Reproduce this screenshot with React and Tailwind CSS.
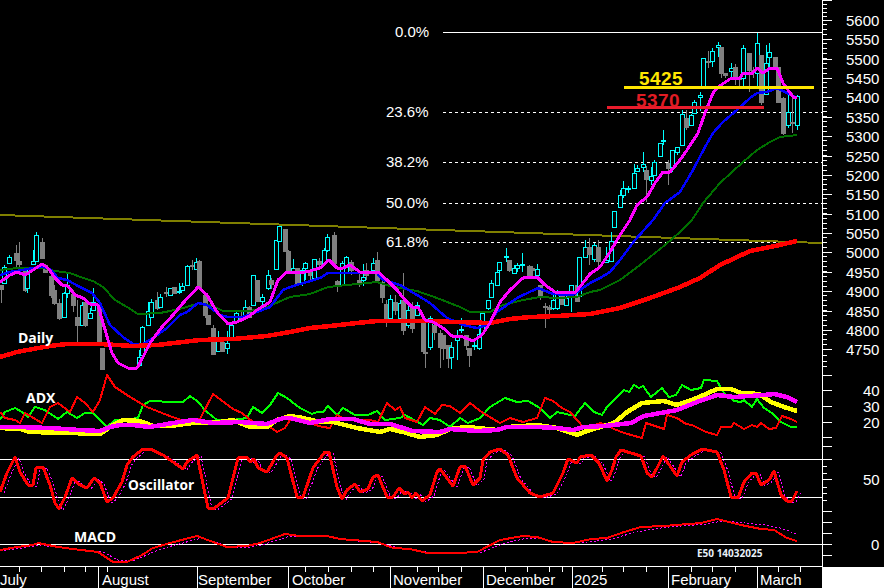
import React from 'react';

// [x, high, low, bodyTop, bodyBottom, up?]
const candles = [
  [1,285,303,285,289,0],[4,265,283,267,283,1],[9,255,263,257,263,1],[16,245,268,253,260,0],[19,242,267,261,264,0],
  [25,269,292,269,290,0],[27,270,293,274,288,1],[33,250,265,261,264,1],[36,232,262,235,261,1],[42,238,258,242,258,0],
  [45,264,273,265,272,0],[51,272,298,276,295,0],[54,285,305,290,303,0],[59,299,320,303,318,0],[64,292,318,293,317,1],
  [67,274,298,285,293,1],[73,290,312,294,305,0],[77,300,342,317,325,0],[82,302,326,305,325,1],[85,300,327,302,325,0],
  [90,308,319,313,318,1],[93,288,310,302,310,1],[99,303,345,304,342,0],[102,348,369,348,369,0],
  [139,350,365,357,365,1],[142,326,356,327,355,1],[148,302,326,311,325,1],[151,299,318,302,317,1],[157,292,310,300,308,0],
  [160,294,308,297,307,1],[166,287,297,292,293,0],[170,288,296,288,295,1],[174,287,293,287,293,0],[179,283,294,291,292,1],
  [182,283,291,286,290,1],[187,265,286,266,285,1],[192,260,270,265,266,0],[196,258,270,262,269,1],[199,260,288,261,287,0],
  [205,295,318,295,315,0],[208,315,325,315,324,0],[213,325,355,328,354,0],[218,331,352,338,351,1],[222,340,352,342,351,0],
  [227,331,354,343,348,1],[231,325,337,325,337,1],[236,312,322,313,322,1],[241,312,320,316,318,0],[245,300,317,307,317,1],
  [249,306,318,307,317,0],[253,275,306,275,305,1],[257,280,302,280,301,0],[262,294,305,297,301,1],[268,270,290,275,288,1],
  [271,278,289,280,284,0],[276,240,270,240,269,1],[279,226,242,226,241,1],[285,229,252,229,251,0],[288,250,272,251,270,0],
  [293,259,272,268,271,1],[297,268,285,268,283,0],[302,268,286,270,283,1],[305,262,280,263,268,1],[310,270,282,272,275,0],
  [314,259,280,259,278,1],[319,258,270,261,264,0],[324,248,265,250,263,1],[327,234,252,237,250,1],[334,232,265,235,263,0],
  [337,280,292,281,286,0],[342,261,286,263,285,1],[346,256,273,257,272,1],[351,260,275,262,270,0],[359,272,287,280,282,0],
  [363,264,286,277,280,1],[366,263,280,270,275,0],[373,258,272,263,270,1],[377,252,280,260,280,0],[382,280,303,282,297,0],
  [386,300,327,304,318,0],[390,295,320,299,318,1],[395,295,315,302,310,0],[400,300,320,303,318,1],[403,273,335,300,330,0],
  [408,305,328,310,325,1],[412,302,333,307,328,0],[417,302,315,305,315,1],[423,322,352,323,351,0],[425,322,368,352,353,0],
  [430,316,350,318,347,1],[434,322,340,325,332,0],[440,330,368,333,347,0],[443,335,360,335,348,0],[448,345,368,345,358,0],
  [451,342,369,347,357,1],[457,330,360,335,340,1],[461,318,333,329,330,1],[466,335,350,335,345,0],[469,348,367,348,355,0],
  [474,340,350,345,346,1],[479,322,350,334,348,1],[482,313,335,313,333,1],[488,300,310,300,308,1],[491,280,298,283,297,1],
  [497,265,286,272,285,1],[499,262,272,262,270,1],[506,248,262,256,257,1],[509,260,272,260,270,0],[514,265,274,268,273,1],
  [517,263,272,265,268,1],[522,253,272,264,265,1],[529,265,275,266,275,0],[532,266,278,268,270,0],[537,264,280,269,275,1],
  [540,285,300,285,297,0],[545,303,328,306,307,0],[549,305,315,307,309,0],[553,290,310,300,308,1],[557,290,310,292,308,1],
  [562,293,305,295,304,0],[566,295,305,298,305,1],[571,285,312,285,297,1],[577,285,302,285,301,0],[579,257,297,257,296,1],
  [585,240,258,247,257,1],[589,238,265,247,254,0],[594,243,262,245,259,1],[598,240,270,247,261,0],[606,247,263,260,262,1],
  [611,232,262,241,261,1],[614,211,227,211,227,1],[620,190,207,195,207,1],[623,181,198,188,195,1],[628,186,193,188,189,1],
  [634,164,189,173,188,1],[637,165,172,168,171,1],[643,152,172,164,167,1],[646,166,202,170,179,0],[651,167,185,176,180,1],
  [654,160,176,162,175,1],[660,143,156,143,156,1],[663,130,145,140,141,1],[668,160,185,163,168,0],[672,150,172,150,167,1],
  [677,147,155,147,152,1],[682,110,145,114,145,1],[686,110,130,118,127,0],[691,114,126,115,125,1],[694,100,113,102,113,1],
  [700,92,111,95,97,1],[703,58,88,58,87,1],[708,51,68,61,62,0],[712,48,67,51,61,1],[718,42,57,45,47,1],
  [721,47,78,47,73,0],[725,73,78,73,75,0],[731,63,77,68,71,1],[735,64,85,67,77,0],[739,77,86,77,79,0],
  [743,45,86,48,78,1],[749,53,92,53,70,0],[753,67,78,70,72,0],[757,33,88,43,73,1],[761,55,105,55,102,0],
  [766,45,95,63,94,1],[769,43,70,52,57,1],[775,57,68,57,68,0],[778,67,102,67,102,0],[783,97,135,98,133,0],
  [788,90,128,112,125,1],[792,93,133,122,123,0],[797,95,130,96,125,1],
];

const ma5 = "0,282 10,275 17,272 25,275 33,270 42,264 48,268 55,278 62,285 68,286 75,295 83,298 90,304 98,305 103,323 112,353 118,363 128,368 137,368 143,357 150,343 162,327 173,315 183,303 198,287 207,295 217,312 228,324 237,322 248,317 257,310 270,302 278,280 287,272 300,273 310,271 320,268 329,260 337,268 343,268 350,265 360,272 378,272 387,280 397,290 405,300 412,307 418,307 425,320 433,322 443,328 452,336 463,337 473,341 482,335 490,323 500,302 510,290 523,278 537,277 545,285 555,292 575,293 583,283 590,274 600,267 610,252 620,235 630,220 637,205 647,197 655,183 663,172 670,172 680,160 687,150 698,133 705,113 713,93 718,87 730,79 740,78 743,73 753,73 757,68 763,73 770,68 777,68 783,83 793,97 797,97";
const ma20 = "0,275 10,272 23,270 33,268 43,267 50,269 58,278 67,280 80,287 92,293 100,303 110,325 123,337 133,344 143,344 153,338 167,328 180,315 187,312 198,303 207,305 220,315 228,317 243,317 257,312 270,307 283,290 290,287 307,282 320,278 328,273 350,273 377,273 383,280 400,285 417,295 430,303 447,318 463,325 477,328 487,325 497,312 517,298 538,288 553,294 573,295 590,283 600,278 610,272 620,260 635,240 653,220 665,203 680,192 693,170 705,147 713,133 723,122 737,110 750,98 757,93 767,92 777,88 787,93 795,97";
const ma50 = "0,270 17,268 43,268 55,271 70,273 83,278 93,281 103,287 115,300 127,307 138,314 160,313 170,311 183,308 200,303 213,306 223,311 250,311 267,307 290,297 310,294 328,287 347,285 377,282 390,286 417,291 437,298 460,307 470,312 490,312 503,305 523,300 540,297 557,298 577,297 590,292 600,290 620,280 640,265 665,245 680,232 692,220 703,203 720,183 743,162 757,150 770,142 780,137 797,135";
const ma200 = "0,357 17,352 33,349 50,346 67,344 100,344 133,346 157,345 200,340 233,339 267,336 290,332 310,328 330,326 357,323 377,321 423,321 457,322 490,323 510,319 530,317 557,316 590,314 620,308 650,298 680,287 700,278 720,265 750,251 775,246 797,241";

const diPlus = "0,420 5,412 15,408 22,412 28,417 35,407 45,410 58,419 67,412 77,418 85,413 93,413 100,420 107,427 115,420 130,419 138,418 143,405 150,401 173,402 183,402 190,396 197,401 207,412 217,420 233,420 247,418 253,407 262,413 270,405 278,393 287,398 300,408 312,414 317,412 323,412 328,406 337,415 343,408 355,415 368,415 377,411 385,420 400,418 405,415 423,425 430,418 440,420 450,427 460,418 468,423 480,418 490,407 505,398 517,402 528,401 540,408 550,418 557,412 575,416 585,403 594,412 602,415 607,407 616,398 624,390 629,392 634,385 639,388 643,386 651,397 662,388 669,397 676,395 682,385 691,390 701,388 704,380 717,381 721,388 724,393 734,401 741,402 744,400 752,407 757,399 764,408 772,413 781,422 791,427 797,427";
const diMinus = "0,412 5,418 15,420 20,423 25,413 42,423 50,407 58,403 70,412 77,397 85,403 93,412 100,400 107,375 115,387 130,397 147,407 167,415 187,422 200,419 213,394 233,409 242,413 253,422 267,425 277,432 285,428 290,420 300,417 312,424 323,427 330,428 337,415 345,419 357,420 370,420 378,422 387,403 395,410 400,407 405,418 417,422 425,407 435,414 442,405 450,406 460,413 470,403 483,413 500,423 510,418 523,422 537,418 545,398 553,401 562,408 570,412 584,428 601,423 614,429 624,433 642,438 646,423 664,429 667,415 677,418 686,424 692,425 706,432 717,435 721,427 731,427 734,423 744,429 752,425 757,427 761,423 769,429 776,428 782,416 791,419 797,422";
const adx = "0,428 20,429 30,432 70,433 100,434 113,425 123,420 140,421 153,426 170,426 193,423 220,422 233,420 250,427 267,427 277,420 290,416 303,418 320,422 333,422 357,428 380,432 390,429 403,432 420,437 437,435 450,429 467,427 497,430 507,427 537,425 557,428 577,435 584,432 597,428 614,423 627,412 642,403 664,401 677,405 697,398 717,389 731,389 741,393 759,394 771,402 784,407 797,411";
const adxSig = "0,427 17,427 50,428 80,430 100,431 110,427 120,425 133,425 150,427 167,424 193,420 213,423 240,422 267,424 283,418 290,418 310,423 330,419 353,419 370,424 390,424 413,431 440,432 450,429 477,431 497,430 507,427 537,427 557,428 573,430 584,427 604,426 631,423 644,416 677,410 697,402 717,395 734,397 764,395 774,394 787,397 797,402";

const osc = "0,492 7,473 15,457 20,472 28,485 33,485 36,468 43,467 50,485 55,503 59,509 65,497 72,478 80,485 87,488 94,478 100,483 107,502 113,498 122,482 127,465 133,457 143,449 150,449 163,455 173,462 183,469 187,462 197,455 208,508 213,509 228,498 238,458 247,457 250,462 254,459 258,468 267,472 277,455 280,453 287,458 297,497 303,497 313,468 325,452 329,452 337,487 342,499 347,490 355,484 360,492 368,489 373,477 378,475 387,497 393,497 399,488 405,494 408,492 412,498 416,493 422,501 430,495 437,472 440,469 453,486 460,467 465,466 473,485 480,478 483,460 490,452 500,449 508,455 517,478 530,493 540,497 553,493 563,473 568,459 577,463 580,457 591,455 599,463 607,481 612,470 616,457 621,450 641,456 647,473 652,477 657,468 663,456 677,476 682,462 691,455 702,449 717,452 724,470 731,497 738,498 744,482 752,473 756,473 761,485 769,480 774,471 781,495 787,501 792,501 797,491";
const macd = "0,550 17,547 33,545 38,543 58,547 73,549 98,552 113,562 127,562 142,555 153,548 170,543 197,536 213,542 227,547 247,546 260,543 285,534 300,536 327,536 340,539 377,542 393,548 410,549 427,553 457,553 477,552 500,540 523,536 537,537 553,542 573,543 591,539 607,538 624,532 641,527 664,526 701,523 717,519 741,525 761,529 774,530 787,538 797,541";
const macdSig = "0,551 22,548 40,545 62,548 78,550 103,552 118,560 132,561 147,555 158,550 175,545 202,538 218,543 232,548 252,547 265,544 290,536 332,537 345,540 382,543 398,548 415,550 432,553 462,553 482,552 505,543 528,538 542,538 558,542 578,543 596,541 612,539 629,534 646,530 669,527 706,524 722,521 745,523 765,525 780,528 797,534";

const fibo = [
  ['23.6%', 112], ['38.2%', 162], ['50.0%', 203], ['61.8%', 242],
];

const prices = [5600,5550,5500,5450,5400,5350,5300,5250,5200,5150,5100,5050,5000,4950,4900,4850,4800,4750];
const priceY = i => Math.round(20 + i * 19.37);

// minor ticks under every price step, then the indicator scale
const minorTicks = [0, 5, 10, 15];
const majorLower = [375, 390, 406, 422, 437, 446, 459, 479, 511, 522, 533, 544, 555];
const minorLower = [466, 473, 487, 493, 500];

const weekTicks = [19,41,64,85,107,305,328,351,373,417,438,461,505,527,549,562,602,623,646,691,712,735,778,800];
const monthLines = [98,197,288,390,483,572,668,757];
const months = [['July',0],['August',102],['September',198],['October',292],['November',393],['December',486],['2025',574],['February',671],['March',760]];

const Candle = ({ c }) => {
  const [x, hi, lo, top, bot, up] = c;
  const color = up ? '#00ffff' : '#808080';
  return (
    <g>
      <line x1={x + 0.5} x2={x + 0.5} y1={hi} y2={lo} stroke={color} />
      {up ? (
        <rect x={x - 1.5} y={top + 0.5} width={4} height={bot - top} fill="#000" stroke={color} />
      ) : (
        <rect x={x - 2} y={top} width={5} height={bot - top + 1} fill={color} />
      )}
    </g>
  );
};

const Line = ({ points, color, w = 2, dash }) => (
  <polyline points={points} fill="none" stroke={color} strokeWidth={w} strokeDasharray={dash} strokeLinejoin="round" />
);

export default function App() {
  return (
    <div className="flex h-[588px] w-[884px] flex-col overflow-hidden bg-black font-['Liberation_Sans',sans-serif]">
      <svg width="884" height="566" className="block" shapeRendering="crispEdges">
        {/* fibonacci levels */}
        <line x1="443" x2="822" y1="32.5" y2="32.5" stroke="#fff" />
        {fibo.map(([label, y]) => (
          <line key={label} x1="443" x2="822" y1={y + 0.5} y2={y + 0.5} stroke="#fff" strokeDasharray="3 3" />
        ))}
        <text x="395" y="37" className="fill-white text-[15px]">0.0%</text>
        {fibo.map(([label, y]) => (
          <text key={label} x="386" y={y + 5} className="fill-white text-[15px]">{label}</text>
        ))}

        <line x1="0" y1="215" x2="822" y2="243" stroke="#808000" strokeWidth="2" />

        {candles.map(c => <Candle key={c[0]} c={c} />)}

        <Line points={ma50} color="#007000" w={2} />
        <Line points={ma20} color="#0000ff" w={2.5} />
        <Line points={ma200} color="#ff0000" w={4.5} />
        <Line points={ma5} color="#ff00ff" w={3} />

        <line x1="607" x2="764" y1="107.5" y2="107.5" stroke="#ea1c2c" strokeWidth="3" />
        <line x1="624" x2="814" y1="87.5" y2="87.5" stroke="#ffe600" strokeWidth="3" />
        <text x="639" y="85" className="fill-[#ffe600] text-[19px] font-bold tracking-[0.4px]">5425</text>
        <text x="636" y="107" className="fill-[#e01c24] text-[19px] font-bold tracking-[0.4px]">5370</text>

        {/* adx */}
        <Line points={diPlus} color="#00ff00" w={2} />
        <Line points={diMinus} color="#ff0000" w={2} />
        <Line points={adx} color="#ffff00" w={4.5} />
        <Line points={adxSig} color="#ff00ff" w={4.5} />

        {/* oscillator */}
        <line x1="0" x2="822" y1="459.5" y2="459.5" stroke="#fff" />
        <line x1="0" x2="822" y1="497.5" y2="497.5" stroke="#fff" />
        <g transform="translate(4 1)">
          <Line points={osc} color="#ff00ff" w={1} dash="2 2" />
        </g>
        <Line points={osc} color="#ff0000" w={3} />

        {/* macd */}
        <line x1="0" x2="822" y1="544.5" y2="544.5" stroke="#fff" />
        <Line points={macdSig} color="#ff00ff" w={1} dash="2 2" />
        <Line points={macd} color="#ff0000" w={2} />

        <text x="18" y="343" className="fill-white font-['Open_Sans',sans-serif] text-[14px] font-bold">Daily</text>
        <text x="26" y="403" className="fill-white font-['Open_Sans',sans-serif] text-[14px] font-bold">ADX</text>
        <text x="128" y="490" className="fill-white font-['Open_Sans',sans-serif] text-[13.7px] font-bold">Oscillator</text>
        <text x="74" y="542" className="fill-white font-['Open_Sans',sans-serif] text-[14px] font-bold">MACD</text>
        <text x="697" y="557" className="fill-[#e8f0f8] font-['Open_Sans',sans-serif] text-[10px] font-bold">E50 14032025</text>

        {/* right scale */}
        <line x1="822.5" x2="822.5" y1="0" y2="566" stroke="#fff" />
        <line x1="822" x2="832" y1="0.5" y2="0.5" stroke="#fff" />
        {prices.map((p, i) => (
          <g key={p}>
            <line x1="822" x2="832" y1={priceY(i) + 0.5} y2={priceY(i) + 0.5} stroke="#fff" />
            {i < 17 && minorTicks.map(d => (
              <line key={d} x1="822" x2="827" y1={priceY(i) + d + 4.5} y2={priceY(i) + d + 4.5} stroke="#fff" />
            ))}
            <text x="846" y={priceY(i) + 6} className="fill-white text-[15px]">{p}</text>
          </g>
        ))}
        {[4, 8, 12, 16].map(y => (
          <line key={y} x1="822" x2="827" y1={y + 0.5} y2={y + 0.5} stroke="#fff" />
        ))}
        {[355, 361, 366].map(y => (
          <line key={y} x1="822" x2="827" y1={y + 0.5} y2={y + 0.5} stroke="#fff" />
        ))}
        {majorLower.map(y => (
          <line key={y} x1="822" x2="832" y1={y + 0.5} y2={y + 0.5} stroke="#fff" />
        ))}
        {minorLower.map(y => (
          <line key={y} x1="822" x2="827" y1={y + 0.5} y2={y + 0.5} stroke="#fff" />
        ))}
        <text x="863" y="396" className="fill-white text-[15px]">40</text>
        <text x="863" y="412" className="fill-white text-[15px]">30</text>
        <text x="863" y="428" className="fill-white text-[15px]">20</text>
        <text x="863" y="485" className="fill-white text-[15px]">50</text>
        <text x="871" y="550" className="fill-white text-[15px]">0</text>
      </svg>

      <div className="flex flex-1">
        <svg width="823" height="22" className="block" shapeRendering="crispEdges">
          <line x1="0" x2="823" y1="0.5" y2="0.5" stroke="#fff" />
          <line x1="822.5" x2="822.5" y1="0" y2="22" stroke="#fff" />
          {weekTicks.map(x => (
            <line key={x} x1={x + 0.5} x2={x + 0.5} y1="0" y2="6" stroke="#fff" />
          ))}
          {monthLines.map(x => (
            <line key={x} x1={x + 0.5} x2={x + 0.5} y1="0" y2="22" stroke="#fff" />
          ))}
          {months.map(([m, x]) => (
            <text key={m} x={x} y="19" className="fill-white text-[15px]">{m}</text>
          ))}
        </svg>
        <div className="mt-px flex-1 bg-white" />
      </div>
    </div>
  );
}
